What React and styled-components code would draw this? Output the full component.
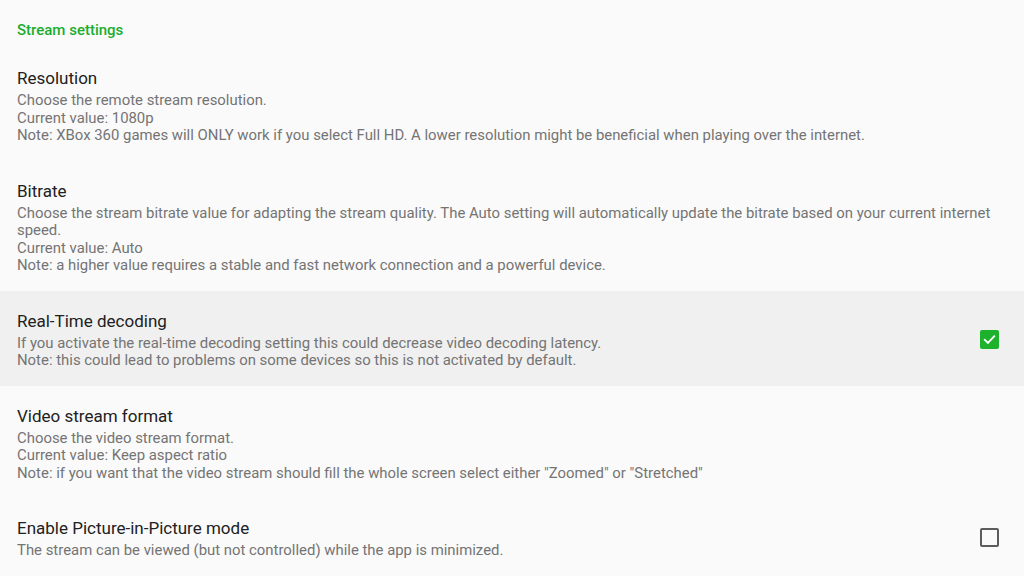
import React from "react";
import styled, { createGlobalStyle } from "styled-components";

const GlobalStyle = createGlobalStyle`
  html, body {
    margin: 0;
    padding: 0;
    background: #fafafa;
    font-family: Roboto, "Noto Sans", sans-serif;
  }
`;

const Screen = styled.div`
  width: 1024px;
  height: 576px;
  overflow: hidden;
  background: #fafafa;
`;

const Category = styled.div`
  padding: 21px 17px 9px;
  font-size: 15px;
  line-height: 18px;
  font-weight: 500;
  color: #1bad2d;
`;

const Row = styled.div`
  display: flex;
  align-items: center;
  padding: 18px 25px 16px 17px;
  background: ${p => (p.active ? "#f0f0f0" : "transparent")};
`;

const Text = styled.div`
  flex: 1;
  min-width: 0;
`;

const Title = styled.div`
  font-size: 17px;
  line-height: 24px;
  margin-bottom: 2px;
  color: #212121;
`;

const Summary = styled.div`
  font-size: 14.9px;
  line-height: 17.5px;
  color: #747474;
`;

const Box = styled.div`
  flex: none;
  width: 19px;
  height: 19px;
  margin: 0 0 0 24px;
  box-sizing: border-box;
  border-radius: 2px;
  display: flex;
  align-items: center;
  justify-content: center;
  background: ${p => (p.checked ? "#1cb22c" : "transparent")};
  border: ${p => (p.checked ? "none" : "2px solid #5c5c5c")};
`;

const Check = ({ checked }) => (
  <Box checked={checked}>
    {checked && (
      <svg width="15" height="15" viewBox="0 0 24 24">
        <path
          d="M4.5 12.5l5 5 10-10.5"
          fill="none"
          stroke="#fff"
          strokeWidth="3"
          strokeLinecap="square"
        />
      </svg>
    )}
  </Box>
);

const prefs = [
  {
    title: "Resolution",
    lines: [
      "Choose the remote stream resolution.",
      "Current value: 1080p",
      "Note: XBox 360 games will ONLY work if you select Full HD. A lower resolution might be beneficial when playing over the internet."
    ]
  },
  {
    title: "Bitrate",
    lines: [
      "Choose the stream bitrate value for adapting the stream quality. The Auto setting will automatically update the bitrate based on your current internet speed.",
      "Current value: Auto",
      "Note: a higher value requires a stable and fast network connection and a powerful device."
    ]
  },
  {
    title: "Real-Time decoding",
    lines: [
      "If you activate the real-time decoding setting this could decrease video decoding latency.",
      "Note: this could lead to problems on some devices so this is not activated by default."
    ],
    checkbox: true,
    checked: true,
    active: true
  },
  {
    title: "Video stream format",
    lines: [
      "Choose the video stream format.",
      "Current value: Keep aspect ratio",
      'Note: if you want that the video stream should fill the whole screen select either "Zoomed" or "Stretched"'
    ]
  },
  {
    title: "Enable Picture-in-Picture mode",
    lines: [
      "The stream can be viewed (but not controlled) while the app is minimized."
    ],
    checkbox: true,
    checked: false
  }
];

export default function App() {
  return (
    <Screen>
      <GlobalStyle />
      <Category>Stream settings</Category>
      {prefs.map(p => (
        <Row key={p.title} active={p.active}>
          <Text>
            <Title>{p.title}</Title>
            {p.lines.map((l, i) => (
              <Summary key={i}>{l}</Summary>
            ))}
          </Text>
          {p.checkbox && <Check checked={p.checked} />}
        </Row>
      ))}
    </Screen>
  );
}
